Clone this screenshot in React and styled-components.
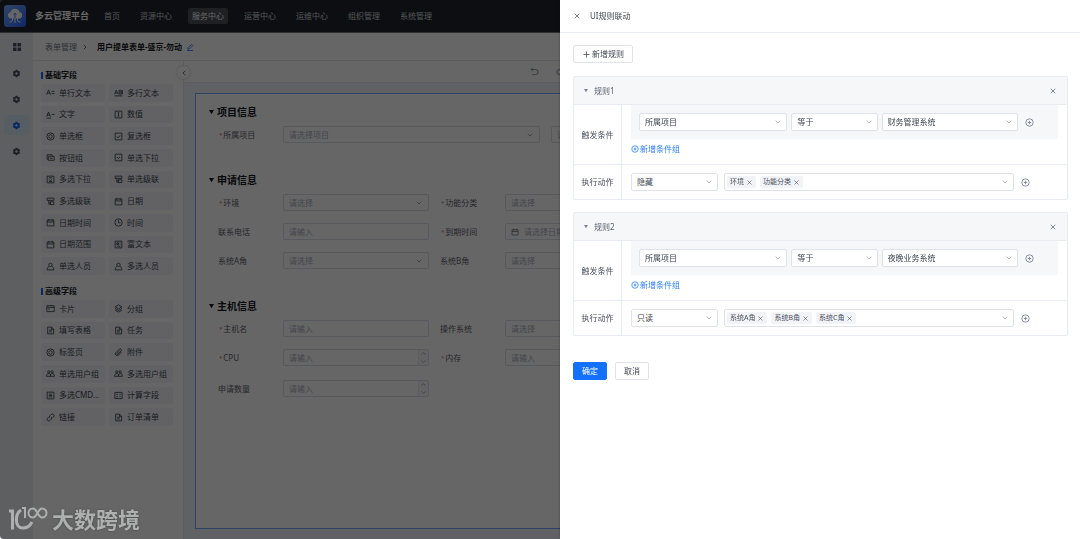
import styled, { createGlobalStyle } from 'styled-components'
import { RiSettings3Fill } from 'react-icons/ri'
import { ChevronDown, ChevronLeft, ChevronRight, ChevronUp, Plus, X } from 'lucide-react'

const GlobalStyle = createGlobalStyle`
  * {
    box-sizing: border-box;
  }
  body {
    margin: 0;
    background: #ffffff;
    font-family: "Noto Sans", "Noto Sans CJK SC", sans-serif;
    font-size: 8px;
    line-height: 12px;
    color: #303540;
  }
  button, input, select {
    font: inherit;
    color: inherit;
    margin: 0;
  }
  button {
    display: flex;
    align-items: center;
    padding: 0;
    border: none;
    background: none;
    cursor: pointer;
  }
  a {
    color: inherit;
    text-decoration: none;
  }
  h1, h2, h3, ul {
    margin: 0;
    padding: 0;
    font-size: inherit;
    list-style: none;
  }
  svg {
    display: block;
    flex: none;
  }
`

const Page = styled.div`
  display: flex;
  flex-direction: column;
  height: 100vh;
  overflow: hidden;
`
const Header = styled.header`
  display: flex;
  align-items: center;
  height: 33px;
  flex: none;
  padding-left: 4px;
  border-bottom: 1px solid #70757c;
  background: #20252b;
`
const Brand = styled.h1`
  display: flex;
  align-items: center;
  gap: 9px;
  margin-right: 11px;
  font-size: 9px;
  color: #ffffff;
`
const TopNav = styled.nav`
  display: flex;
  gap: 12px;
`
const TopLink = styled.a`
  padding: 2px 4px;
  border-radius: 2px;
  color: ${p => p.$active ? '#ffffff' : '#cfd3d8'};
  background: ${p => p.$active ? '#4b5056' : 'transparent'};
`
const Body = styled.div`
  display: flex;
  flex: 1;
  min-height: 0;
`
const SideNav = styled.nav`
  display: flex;
  flex-direction: column;
  gap: 6px;
  width: 33px;
  padding: 4px;
  background: #e9eef3;
`
const SideLink = styled.a`
  display: flex;
  align-items: center;
  justify-content: center;
  height: 20px;
  border-radius: 3px;
  color: ${p => p.$active ? '#1668ff' : '#4a5262'};
  background: ${p => p.$active ? '#d8e8f8' : 'transparent'};
`
const Main = styled.main`
  display: flex;
  flex-direction: column;
  flex: 1;
  min-width: 0;
  background: #ffffff;
`
const Breadcrumb = styled.div`
  display: flex;
  align-items: center;
  gap: 4px;
  height: 28px;
  flex: none;
  padding-left: 12px;
  border-bottom: 1px solid #e6e9ee;
  color: #70757f;
  strong {
    margin-left: 4px;
    color: #15181e;
  }
  button {
    color: #2b66f6;
  }
`
const Designer = styled.div`
  display: flex;
  flex: 1;
  min-height: 0;
`
const Palette = styled.aside`
  position: relative;
  width: 151px;
  padding: 8px 10px 0 8px;
  border-right: 1px solid #e6e9ee;
`
const Collapse = styled.button`
  position: absolute;
  top: 5px;
  right: -7px;
  width: 13px;
  height: 13px;
  justify-content: center;
  border-radius: 50%;
  background: #ffffff;
  box-shadow: 0 0 3px rgba(0, 0, 0, 0.25);
`
const GroupTitle = styled.h2`
  display: flex;
  align-items: center;
  gap: 2px;
  height: 12px;
  margin-bottom: 3px;
  color: #15181e;
  &::before {
    content: '';
    width: 2px;
    height: 7px;
    background: #1668ff;
  }
`
const PaletteGrid = styled.div`
  display: grid;
  grid-template-columns: 1fr 1fr;
  grid-auto-rows: 1fr;
  gap: 4px;
  height: ${p => p.$height}px;
  margin-bottom: 10px;
`
const PaletteItem = styled.button`
  gap: 4px;
  min-height: 0;
  padding-left: 5px;
  border-radius: 2px;
  background: #f5f6f9;
  color: #424855;
  white-space: nowrap;
`
const Workspace = styled.section`
  display: flex;
  flex-direction: column;
  flex: 1;
  min-width: 0;
  background: #eef3f9;
`
const Toolbar = styled.div`
  display: flex;
  align-items: center;
  gap: 17px;
  height: 22px;
  flex: none;
  padding-left: 346px;
  border-bottom: 1px solid #e3e8ef;
  background: #ffffff;
  color: #8d93a0;
`
const Canvas = styled.form`
  flex: 1;
  margin: 10px 11px;
  padding: 11px 13px;
  border: 1px solid #6ea8fe;
  background: #ffffff;
`
const Section = styled.section`
  margin-bottom: 30px;
`
const SectionTitle = styled.h3`
  display: flex;
  align-items: center;
  gap: 3px;
  height: 14px;
  margin-bottom: 7px;
  font-size: 10px;
  color: #15181e;
`
const FieldGrid = styled.div`
  display: grid;
  grid-template-columns: ${p => p.$columns || '211px 211px'};
  gap: 12px 11px;
  padding-left: 9px;
`
const FieldRow = styled.div`
  display: grid;
  grid-template-columns: ${p => p.$bare ? '1fr' : '65px 1fr'};
  align-items: center;
  margin-bottom: ${p => p.$number ? 2 : 0}px;
`
const Label = styled.label`
  display: flex;
  gap: 1px;
  padding-left: ${p => p.$required ? 1 : 0}px;
  color: #5c616b;
  i {
    font-size: 6px;
    color: #c8606a;
    font-style: normal;
  }
`
const Control = styled.span`
  display: flex;
  align-items: center;
  gap: 5px;
  height: 17px;
  padding-left: 5px;
  border: 1px solid #d9dee6;
  border-radius: 2px;
  color: #70757f;
  overflow: hidden;
  input, select {
    flex: 1;
    min-width: 0;
    height: 15px;
    padding: 0;
    border: none;
    outline: none;
    appearance: none;
    background: none;
    color: #a9b0bd;
  }
  input::placeholder {
    color: #a9b0bd;
    opacity: 1;
  }
  > svg:last-child {
    margin-right: 5px;
  }
`
const Stepper = styled.span`
  display: flex;
  flex-direction: column;
  justify-content: space-between;
  align-items: center;
  width: 10px;
  height: 15px;
  border-left: 1px solid #e6e9ee;
  background: #f7f8fa;
`

const Mask = styled.div`
  position: fixed;
  inset: 0;
  border-radius: 4px;
  background: rgba(0, 0, 0, 0.6);
`
const Drawer = styled.section`
  position: fixed;
  top: 0;
  right: 0;
  bottom: 0;
  width: calc(50% - 20px);
  background: #ffffff;
  box-shadow: 0 0 3px rgba(0, 0, 0, 0.3);
`
const DrawerHeader = styled.header`
  display: flex;
  align-items: center;
  gap: 9px;
  height: 33px;
  padding-left: 13px;
  border-bottom: 1px solid #e9ecf0;
  color: #3f4550;
  h2 {
    font-weight: 400;
  }
`
const DrawerBody = styled.div`
  padding: 12px 12px 0 13px;
`
const Button = styled.button`
  justify-content: center;
  gap: 1px;
  height: 18px;
  padding: 0 8px;
  border: 1px solid ${p => p.$primary ? '#1470ff' : '#dfe3e9'};
  border-radius: 2px;
  background: ${p => p.$primary ? '#1470ff' : '#ffffff'};
  color: ${p => p.$primary ? '#ffffff' : '#3f4550'};
`
const Rules = styled.div`
  display: flex;
  flex-direction: column;
  gap: 12px;
  margin: 13px 0 26px;
`
const RuleCard = styled.article`
  border: 1px solid #e8ecf1;
  border-radius: 2px;
`
const RuleHeader = styled.header`
  display: flex;
  align-items: center;
  gap: 6px;
  height: 28px;
  padding: 0 10px;
  border-bottom: 1px solid #e8ecf1;
  background: #f6f7f9;
  color: #5a6270;
  > svg {
    color: #76849a;
  }
  h3 {
    flex: 1;
    font-weight: 400;
  }
`
const RuleLine = styled.div`
  display: grid;
  grid-template-columns: 48px 1fr;
  & + & {
    border-top: 1px solid #e8ecf1;
  }
`
const RuleLabel = styled.div`
  display: flex;
  align-items: center;
  justify-content: center;
  border-right: 1px solid #e8ecf1;
  color: #4a505c;
`
const Trigger = styled.div`
  padding: 0 9px 9px;
`
const Condition = styled.div`
  display: grid;
  grid-template-columns: 148fr 86fr 136fr 14px;
  align-items: center;
  gap: 4px;
  padding: 8px 22px 8px 8px;
  background: #f5f7f9;
`
const AddGroup = styled.button`
  gap: 1px;
  margin-top: 4px;
  color: #2f80f0;
`
const Action = styled.div`
  display: grid;
  grid-template-columns: 87px 1fr 10px;
  align-items: center;
  gap: 6px;
  padding: 8px 37px 8px 9px;
`
const RuleSelect = styled.span`
  display: flex;
  position: relative;
  align-items: center;
  color: #8b93a1;
  select {
    width: 100%;
    height: 18px;
    padding: 0 14px 0 5px;
    border: 1px solid #dfe3e9;
    border-radius: 2px;
    outline: none;
    appearance: none;
    background: #ffffff;
    color: #3f4550;
  }
  svg {
    position: absolute;
    right: 5px;
    pointer-events: none;
  }
`
const TagBox = styled.div`
  display: flex;
  align-items: center;
  gap: 4px;
  height: 18px;
  padding: 0 4px 0 2px;
  border: 1px solid #dfe3e9;
  border-radius: 2px;
  color: #8b93a1;
  > svg {
    margin-left: auto;
  }
`
const Tag = styled.span`
  display: flex;
  align-items: center;
  gap: 2px;
  height: 12px;
  padding: 0 3px;
  border-radius: 2px;
  background: #f2f3f6;
  font-size: 7px;
  color: #4a505c;
`
const IconButton = styled.button`
  justify-content: center;
  color: #7d889e;
`
const Footer = styled.footer`
  display: flex;
  gap: 8px;
`
const Watermark = styled.div`
  position: fixed;
  left: 9px;
  bottom: 7px;
  display: flex;
  align-items: center;
  gap: 4px;
  height: 28px;
  font-family: "Noto Sans CJK SC", sans-serif;
  font-size: 22px;
  font-weight: 700;
  line-height: 28px;
  color: #aeb0af;
  text-shadow: 0 0 2px rgba(0, 0, 0, 0.4);
`

const glyphs = {
  line: 'M1 12 4.5 3.5 8 12M2.3 9h4.4M10 6h5M10 10h5',
  lines: 'M1 11 4 4l3 7M2 9h4M9 4v7M9 4h4v7H9M9 7.5h4M15 4v7M1 14h14',
  word: 'M1 12 4.5 3.5 8 12M2.3 9h4.4M10 8h5M1 14.5h8',
  number: 'M2 2h12v12H2zM6.5 5h3M8 5v6M6.5 11h3',
  radio: 'M8 1.5a6.5 6.5 0 1 0 0 13 6.5 6.5 0 0 0 0-13M8 4.8a3.2 3.2 0 1 0 0 6.4 3.2 3.2 0 0 0 0-6.4',
  check: 'M2 2h12v12H2zM5 8l2.2 2.5L11 6',
  buttons: 'M4 11H2V3h9v2M4 6h10.5v7H4zM6.5 9.5h5.5',
  drop: 'M2 2h12v12H2zM5 7l3 3 3-3',
  multi: 'M2 2h12v12H2zM5 5h6M5.5 8 8 10l2.500-2M5 11.500h6',
  cascade: 'M2 2h12v4H2zM5 6v7h3M5 9.5h3M8 8.5h6v5H8z',
  date: 'M2 3.5h12V14H2zM2 7h12M5 1.5v3.500M11 1.500v3.500',
  time: 'M8 1.5a6.5 6.5 0 1 0 0 13 6.5 6.5 0 0 0 0-13M8 4v4.5h3.500',
  rich: 'M2 2h12v12H2zM5 5h3v3H5zM10 5h1.5M10 8h1.5M5 11h6.5',
  user: 'M8 2a3 3 0 1 0 0 6 3 3 0 0 0 0-6M5.5 7.5C3 9 2 11 2 14h12c0-3-1-5-3.5-6.5',
  users: 'M5 3a2 2 0 1 0 0 4 2 2 0 0 0 0-4M11 3a2 2 0 1 0 0 4 2 2 0 0 0 0-4M1 13c0-3 1-5 4-5s3 2 3 5zM8 13c0-3 1-5 3-5 3 0 4 2 4 5z',
  card: 'M1.5 3h13v10.5h-13zM1.5 6h13M4 9h3',
  layers: 'M8 1.5 14 5 8 8.5 2 5zM2 8l6 3.5L14 8M2 11l6 3.5 6-3.5',
  doc: 'M3 2h7l3.5 3.5V14H3zM5.5 7.5h5M5.5 10.5h5M9.5 2v4h4',
  clip: 'M13.5 7 8 12.7a3.2 3.2 0 0 1-4.6-4.6l6-6a2.2 2.2 0 0 1 3.2 3.2l-5.7 5.7a1 1 0 0 1-1.6-1.6L10 4.7',
  list: 'M2 2h12v12H2zM5 5.5h6M5 8h6M5 10.5h6',
  calc: 'M1.5 2.5h13v11h-13zM4 6h3M9.5 6H12M4 10h3M9.5 10H12',
  link: 'M6.500 9.500a3 3 0 0 1 0-4.300l2.500-2.500a3 3 0 0 1 4.300 4.300L12 8.300M9.500 6.500a3 3 0 0 1 0 4.300L7 13.300A3 3 0 0 1 2.700 9L4 7.700',
  edit: 'M4 9.5 11 2.5l2.5 2.5-7 7L3.5 12.5zM2 15h12',
  undo: 'M5 1.5 2 4.5l3 3M2 4.5h8a4.5 4.5 0 0 1 0 9H4',
  redo: 'M11 1.5l3 3-3 3M14 4.5H6a4.5 4.5 0 0 0 0 9h6',
  add: 'M8 1.500a6.500 6.500 0 1 0 0 13 6.500 6.500 0 0 0 0-13M8 5v6M5 8h6',
}

const Glyph = ({ name, size = 9 }) => (
  <svg width={size} height={size} viewBox="0 0 16 16" fill="none" stroke="currentColor" strokeWidth="1.6" aria-hidden="true">
    <path d={glyphs[name]} />
  </svg>
)

const Caret = ({ size = 5 }) => (
  <svg width={size} height={size} viewBox="0 0 6 6" fill="currentColor" aria-hidden="true">
    <path d="M0 0h6L3 5z" />
  </svg>
)

const Logo = () => (
  <svg width="22" height="22" viewBox="0 0 22 22" aria-hidden="true">
    <defs>
      <linearGradient id="logo" x1="0" y1="0" x2="1" y2="1">
        <stop offset="0" stopColor="#78b0ff" />
        <stop offset="1" stopColor="#2a60ff" />
      </linearGradient>
    </defs>
    <rect width="22" height="22" rx="3" fill="url(#logo)" />
    <path d="M7 13.5a3.2 3.2 0 0 1-.6-6.3A4.8 4.8 0 0 1 15.5 7a3.3 3.3 0 0 1-.3 6.5z" fill="#ffffff" />
    <path d="M11 12v6M8.500 13v2.500L7 17H5.500M13.500 13v2.500L15 17h1.500" fill="none" stroke="#ffffff" />
    <path d="M11 8v5M9.500 9.500 11 8l1.500 1.500" fill="none" stroke="#3f78f5" />
  </svg>
)

const basicItems = [
  ['line', '单行文本'], ['lines', '多行文本'],
  ['word', '文字'], ['number', '数值'],
  ['radio', '单选框'], ['check', '复选框'],
  ['buttons', '按钮组'], ['drop', '单选下拉'],
  ['multi', '多选下拉'], ['cascade', '单选级联'],
  ['cascade', '多选级联'], ['date', '日期'],
  ['date', '日期时间'], ['time', '时间'],
  ['date', '日期范围'], ['rich', '富文本'],
  ['user', '单选人员'], ['user', '多选人员'],
]
const advancedItems = [
  ['card', '卡片'], ['layers', '分组'],
  ['doc', '填写表格'], ['doc', '任务'],
  ['radio', '标签页'], ['clip', '附件'],
  ['users', '单选用户组'], ['users', '多选用户组'],
  ['list', '多选CMD...'], ['calc', '计算字段'],
  ['link', '链接'], ['doc', '订单清单'],
]

const rules = [
  { name: '规则1', value: '财务管理系统', action: '隐藏', tags: ['环境', '功能分类'] },
  { name: '规则2', value: '夜晚业务系统', action: '只读', tags: ['系统A角', '系统B角', '系统C角'] },
]

function PaletteGroup({ title, items, height }) {
  return (
    <>
      <GroupTitle>{title}</GroupTitle>
      <PaletteGrid $height={height}>
        {items.map(([icon, text]) => (
          <PaletteItem key={text} type="button"><Glyph name={icon} />{text}</PaletteItem>
        ))}
      </PaletteGrid>
    </>
  )
}

function Field({ id, label, required, type = 'text', placeholder = '请输入' }) {
  return (
    <FieldRow $bare={!label} $number={type === 'number'}>
      {label && <Label htmlFor={id} $required={required}>{required && <i>*</i>}{label}</Label>}
      <Control>
        {type === 'date' && <Glyph name="date" size={8} />}
        {type === 'select'
          ? <select id={id} aria-label={label || placeholder}><option>{placeholder}</option></select>
          : <input id={id} placeholder={placeholder} />}
        {type === 'select' && <ChevronDown size={8} />}
        {type === 'number' && <Stepper><ChevronUp size={7} /><ChevronDown size={7} /></Stepper>}
      </Control>
    </FieldRow>
  )
}

function FormSection({ title, columns, children }) {
  return (
    <Section>
      <SectionTitle><Caret />{title}</SectionTitle>
      <FieldGrid $columns={columns}>{children}</FieldGrid>
    </Section>
  )
}

const Dropdown = ({ label, value }) => (
  <RuleSelect>
    <select aria-label={label}><option>{value}</option></select>
    <ChevronDown size={8} />
  </RuleSelect>
)

function Rule({ rule }) {
  return (
    <RuleCard>
      <RuleHeader>
        <Caret size={4} />
        <h3>{rule.name}</h3>
        <IconButton type="button" aria-label="删除规则"><X size={8} strokeWidth={3} /></IconButton>
      </RuleHeader>
      <RuleLine>
        <RuleLabel>触发条件</RuleLabel>
        <Trigger>
          <Condition>
            <Dropdown label="字段" value="所属项目" />
            <Dropdown label="关系" value="等于" />
            <Dropdown label="值" value={rule.value} />
            <IconButton type="button" aria-label="新增条件"><Glyph name="add" /></IconButton>
          </Condition>
          <AddGroup type="button"><Glyph name="add" size={8} />新增条件组</AddGroup>
        </Trigger>
      </RuleLine>
      <RuleLine>
        <RuleLabel>执行动作</RuleLabel>
        <Action>
          <Dropdown label="动作" value={rule.action} />
          <TagBox>
            {rule.tags.map(tag => (
              <Tag key={tag}>{tag}<button type="button" aria-label={`移除${tag}`}><X size={7} /></button></Tag>
            ))}
            <ChevronDown size={8} />
          </TagBox>
          <IconButton type="button" aria-label="新增动作"><Glyph name="add" /></IconButton>
        </Action>
      </RuleLine>
    </RuleCard>
  )
}

function App() {
  const tabs = ['首页', '资源中心', '服务中心', '运营中心', '运维中心', '组织管理', '系统管理']
  return (
    <>
      <GlobalStyle />
      <Page>
        <Header>
          <Brand><Logo />多云管理平台</Brand>
          <TopNav>
            {tabs.map(tab => <TopLink key={tab} href="#" $active={tab === '服务中心'}>{tab}</TopLink>)}
          </TopNav>
        </Header>
        <Body>
          <SideNav>
            <SideLink href="#" aria-label="菜单">
              <svg width="8" height="8" viewBox="0 0 8 8" fill="currentColor">
                <path d="M0 0h3.500v3.500H0zM4.500 0H8v3.500H4.500zM0 4.500h3.500V8H0zM4.500 4.500H8V8H4.500z" />
              </svg>
            </SideLink>
            {[1, 2, 3, 4].map(n => (
              <SideLink key={n} href="#" aria-label={`设置${n}`} $active={n === 3}><RiSettings3Fill size={9} /></SideLink>
            ))}
          </SideNav>
          <Main>
            <Breadcrumb>
              <a href="#">表单管理</a>
              <ChevronRight size={8} strokeWidth={3} />
              <strong>用户提单表单-盛京-勿动</strong>
              <button type="button" aria-label="编辑"><Glyph name="edit" size={8} /></button>
            </Breadcrumb>
            <Designer>
              <Palette>
                <Collapse type="button" aria-label="收起"><ChevronLeft size={8} /></Collapse>
                <PaletteGroup title="基础字段" items={basicItems} height={191} />
                <PaletteGroup title="高级字段" items={advancedItems} height={126} />
              </Palette>
              <Workspace>
                <Toolbar>
                  <IconButton type="button" aria-label="撤销"><Glyph name="undo" /></IconButton>
                  <IconButton type="button" aria-label="重做"><Glyph name="redo" /></IconButton>
                </Toolbar>
                <Canvas>
                  <FormSection title="项目信息" columns="322px 111px">
                    <Field id="project" label="所属项目" required type="select" placeholder="请选择项目" />
                    <Field id="projectEnv" type="select" placeholder="请选择" />
                  </FormSection>
                  <FormSection title="申请信息">
                    <Field id="env" label="环境" required type="select" placeholder="请选择" />
                    <Field id="category" label="功能分类" required type="select" placeholder="请选择" />
                    <Field id="phone" label="联系电话" />
                    <Field id="expire" label="到期时间" required type="date" placeholder="请选择日期" />
                    <Field id="roleA" label="系统A角" type="select" placeholder="请选择" />
                    <Field id="roleB" label="系统B角" type="select" placeholder="请选择" />
                  </FormSection>
                  <FormSection title="主机信息">
                    <Field id="host" label="主机名" required />
                    <Field id="os" label="操作系统" type="select" placeholder="请选择" />
                    <Field id="cpu" label="CPU" required type="number" />
                    <Field id="memory" label="内存" required type="number" />
                    <Field id="count" label="申请数量" type="number" />
                  </FormSection>
                </Canvas>
              </Workspace>
            </Designer>
          </Main>
        </Body>
      </Page>
      <Mask />
      <Drawer role="dialog" aria-label="UI规则联动">
        <DrawerHeader>
          <button type="button" aria-label="关闭"><X size={8} /></button>
          <h2>UI规则联动</h2>
        </DrawerHeader>
        <DrawerBody>
          <Button type="button"><Plus size={9} />新增规则</Button>
          <Rules>
            {rules.map(rule => <Rule key={rule.name} rule={rule} />)}
          </Rules>
          <Footer>
            <Button type="button" $primary>确定</Button>
            <Button type="button">取消</Button>
          </Footer>
        </DrawerBody>
      </Drawer>
      <Watermark>
        <svg width="39" height="28" viewBox="0 0 39 28" fill="none" stroke="currentColor" aria-hidden="true">
          <path d="M0 7h3.500v18.500M12 6C6 10 5 24 14 24c4 0 7-2 9-6" strokeWidth="3" />
          <path d="M13 4h3v10M24 4.500a4.500 4.500 0 1 0 0 9c4 0 5-9 9-9a4.500 4.500 0 1 1 0 9c-4 0-5-9-9-9z" strokeWidth="2" />
        </svg>
        大数跨境
      </Watermark>
    </>
  )
}

export default App
